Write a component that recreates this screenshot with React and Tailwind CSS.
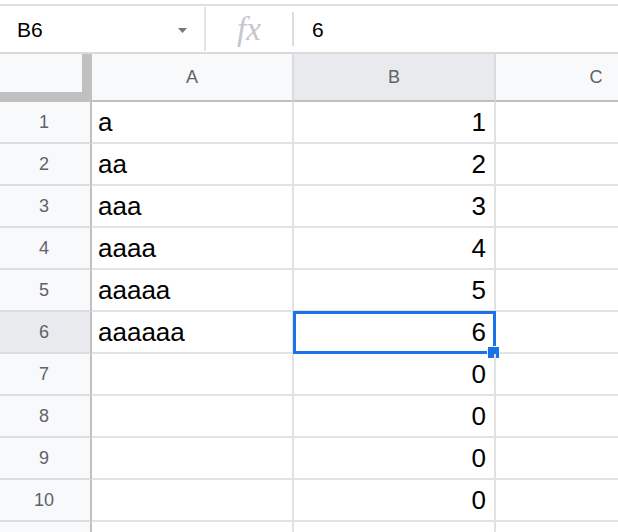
import React from "react";

const rows = [
  ["a", "1"],
  ["aa", "2"],
  ["aaa", "3"],
  ["aaaa", "4"],
  ["aaaaa", "5"],
  ["aaaaaa", "6"],
  ["", "0"],
  ["", "0"],
  ["", "0"],
  ["", "0"],
  ["", ""],
];

export default function App() {
  return (
    <div className="w-[618px] h-[532px] overflow-hidden bg-white font-['Liberation_Sans',Arial,sans-serif] text-black">
      <div className="h-[4px]" />
      <div className="h-[2px] bg-[#e1e1e1]" />
      {/* formula bar */}
      <div className="flex h-[46px] items-stretch">
        <div className="flex w-[204px] shrink-0 items-center justify-between pl-[17px] pr-[17px]">
          <span className="text-[21px] leading-none">B6</span>
          <svg width="9" height="5" viewBox="0 0 9 5" className="mt-[2px]">
            <path d="M0 0 L9 0 L4.5 5 Z" fill="#777" />
          </svg>
        </div>
        <div className="my-[1px] w-[2px] shrink-0 bg-[#e3e3e3]" />
        <div className="flex w-[86px] shrink-0 items-center justify-center">
          <span className="font-['Liberation_Serif',serif] text-[33px] italic leading-none text-[#c4c7cc]">fx</span>
        </div>
        <div className="my-[6px] w-[2px] shrink-0 bg-[#dcdcdc]" />
        <div className="flex items-center pl-[18px]">
          <span className="text-[21px] leading-none">6</span>
        </div>
      </div>
      <div className="h-[2px] bg-[#dadada]" />
      {/* header row */}
      <div className="flex h-[48px]">
        <div className="h-[48px] w-[92px] shrink-0 border-r-[10px] border-b-[10px] border-[#c0c0c0] bg-[#f8f9fa]" />
        {["A", "B", "C"].map((c) => (
          <div
            key={c}
            className={`flex h-[48px] w-[202px] shrink-0 items-center justify-center border-r-2 border-b-2 border-r-[#dadce0] border-b-[#c0c0c0] text-[18px] text-[#5f6368] ${
              c === "B" ? "bg-[#e8eaed]" : "bg-[#f8f9fa]"
            }`}
          >
            {c}
          </div>
        ))}
      </div>
      {/* rows */}
      {rows.map((r, i) => {
        const sel = i === 5;
        return (
          <div key={i} className="flex h-[42px]">
            <div
              className={`flex h-[42px] w-[92px] shrink-0 items-center justify-center border-r-2 border-b-2 border-r-[#c0c0c0] border-b-[#dadce0] pr-[2px] text-[18px] text-[#5f6368] ${
                sel ? "bg-[#e8eaed]" : "bg-[#f8f9fa]"
              }`}
            >
              {i < 10 ? i + 1 : ""}
            </div>
            <div className="flex h-[42px] w-[202px] shrink-0 items-center border-r-2 border-b-2 border-[#e2e2e2] pl-[6px] text-[26px] leading-none">
              {r[0]}
            </div>
            <div className="relative flex h-[42px] w-[202px] shrink-0 items-center justify-end border-r-2 border-b-2 border-[#e2e2e2] pr-[8px] text-[26px] leading-none">
              {r[1]}
              {sel && (
                <>
                  <div className="absolute left-[-1px] top-[-1px] h-[43px] w-[203px] border-[3px] border-[#1a73e8]" />
                  <div className="absolute left-[193px] top-[34px] h-[13px] w-[13px] border border-white bg-[#1a73e8]" />
                </>
              )}
            </div>
            <div className="flex h-[42px] w-[202px] shrink-0 border-r-2 border-b-2 border-[#e2e2e2]" />
          </div>
        );
      })}
    </div>
  );
}
